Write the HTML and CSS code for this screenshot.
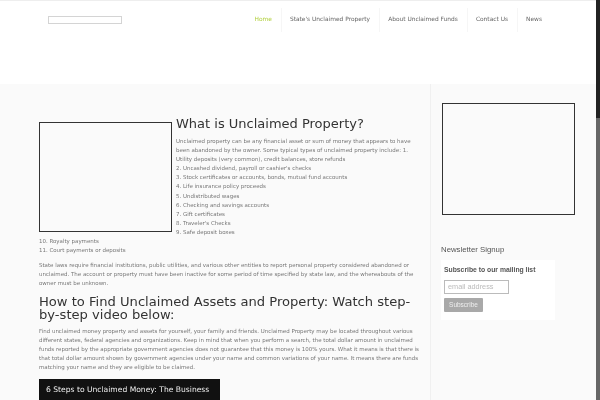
FILE: index.html
```html
<!DOCTYPE html>
<html lang="en">
<head>
<meta charset="utf-8">
<title>What is Unclaimed Property?</title>
<link rel="stylesheet" href="styles.css">
</head>
<body>
<div class="page">
  <header class="header">
    <div class="logo"></div>
    <nav class="nav">
      <a class="nav-item active">Home</a>
      <a class="nav-item">State's Unclaimed Property</a>
      <a class="nav-item">About Unclaimed Funds</a>
      <a class="nav-item">Contact Us</a>
      <a class="nav-item last">News</a>
    </nav>
  </header>
  <div class="content">
    <main class="main">
      <div class="media-left"></div>
      <h1 class="title-first">What is Unclaimed Property?</h1>
      <p class="para">Unclaimed property can be any financial asset or sum of money that appears to have been abandoned by the owner. Some typical types of unclaimed property include: 1. Utility deposits (very common), credit balances, store refunds<br>2. Uncashed dividend, payroll or cashier's checks<br>3. Stock certificates or accounts, bonds, mutual fund accounts<br>4. Life insurance policy proceeds<br>5. Undistributed wages<br>6. Checking and savings accounts<br>7. Gift certificates<br>8. Traveler's Checks<br>9. Safe deposit boxes<br>10. Royalty payments<br>11. Court payments or deposits</p>
      <p class="para">State laws require financial institutions, public utilities, and various other entities to report personal property considered abandoned or unclaimed. The account or property must have been inactive for some period of time specified by state law, and the whereabouts of the owner must be unknown.</p>
      <h2 class="title-second">How to Find Unclaimed Assets and Property: Watch step-by-step video below:</h2>
      <p class="para">Find unclaimed money property and assets for yourself, your family and friends. Unclaimed Property may be located throughout various different states, federal agencies and organizations. Keep in mind that when you perform a search, the total dollar amount in unclaimed funds reported by the appropriate government agencies does not guarantee that this money is 100% yours. What it means is that there is that total dollar amount shown by government agencies under your name and common variations of your name. It means there are funds matching your name and they are eligible to be claimed.</p>
      <div class="video"><span class="video-title">6 Steps to Unclaimed Money: The Business</span></div>
    </main>
    <aside class="sidebar">
      <div class="ad-box"></div>
      <h3 class="widget-title">Newsletter Signup</h3>
      <form class="signup">
        <div class="signup-title">Subscribe to our mailing list</div>
        <div class="email">email address</div>
        <div class="submit">Subscribe</div>
      </form>
    </aside>
    <div class="scrollbar"><div class="thumb"></div></div>
  </div>
</div>
</body>
</html>
```
FILE: styles.css
```css
* { box-sizing: border-box; }
html, body { margin: 0; padding: 0; height: 400px; overflow: hidden; background: #fff; }
.page { height: 400px; display: flex; flex-direction: column; font-family: "DejaVu Sans", sans-serif; position: relative; filter: blur(0.3px); }
.header { height: 84px; flex: none; display: flex; align-items: flex-start; border-top: 1px solid #eee; padding: 7px 49px 0 48px; }
.logo { width: 74px; height: 8px; margin-top: 8px; border: 1px solid #d4d4d4; }
.nav { display: flex; margin-left: auto; flex: none; }
.nav-item { height: 24px; line-height: 23px; font-size: 5.9px; color: #666; padding: 0 9px 0 8px; border-right: 1px solid #f6f6f6; white-space: nowrap; }
.nav-item.active { color: #b0cf3a; }
.nav-item.last { border-right: 0; padding-right: 9px; }
.content { flex: 1; display: flex; background: #fafafa; min-height: 0; position: relative; }
.main { width: 430px; flex: none; padding: 20px 7px 0 39px; color: #777; font-size: 5.47px; line-height: 9.1px; overflow: hidden; }
.media-left { float: left; width: 133px; height: 110px; margin: 18px 4px 0 0; border: 1px solid #333; }
.title-first { margin: 0 0 5px; padding-top: 12px; font-size: 13px; line-height: 16px; font-weight: 400; color: #333; }
.para { margin: 0 0 6px; }
.title-second { margin: 0 0 6px; font-size: 13.1px; line-height: 13px; font-weight: 400; color: #333; }
.video { width: 181px; height: 60px; margin-top: 7px; background: #111; padding: 5px 7px; }
.video-title { color: #eee; font-size: 7.6px; line-height: 11px; white-space: nowrap; }
.sidebar { width: 166px; flex: none; border-left: 1px solid #f0f0f0; padding: 19px 0 0 10px; font-family: "Liberation Sans", sans-serif; }
.ad-box { width: 133px; height: 112px; margin-left: 1px; border: 1px solid #333; }
.widget-title { margin: 29px 0 0; font-size: 7.8px; line-height: 12px; font-weight: 400; color: #555; }
.signup { width: 114px; height: 60px; margin-top: 4px; background: #fff; padding: 5px 3px; font-size: 6.5px; }
.signup-title { font-weight: 700; color: #555; line-height: 10px; font-size: 6.8px; }
.email { width: 65px; height: 14px; margin-top: 5px; border: 1px solid #bbb; padding-left: 3px; line-height: 12px; font-size: 7.3px; color: #bbb; }
.submit { width: 39px; height: 14px; margin-top: 4px; background: #a9a9a9; color: #eee; text-align: center; line-height: 14px; border-radius: 1px; }
.scrollbar { position: absolute; right: 0; top: -84px; bottom: 0; width: 4px; background: #666; }
.thumb { height: 118px; background: #222; }
```
